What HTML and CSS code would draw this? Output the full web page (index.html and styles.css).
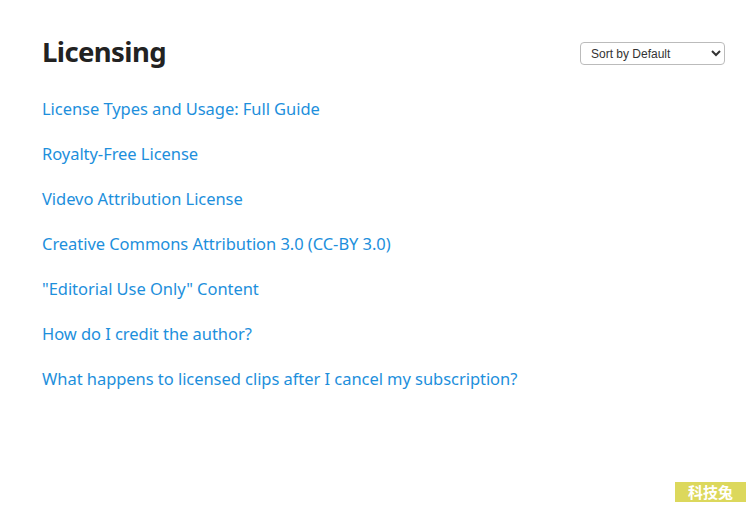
FILE: index.html
```html
<!DOCTYPE html>
<html>
<head>
<meta charset="utf-8">
<link rel="stylesheet" href="styles.css">
</head>
<body>
<div class="page">
  <div class="header">
    <h1 class="title">Licensing</h1>
    <select class="sort">
      <option>Sort by Default</option>
    </select>
  </div>
  <ul class="links">
    <li><a href="#">License Types and Usage: Full Guide</a></li>
    <li><a href="#">Royalty-Free License</a></li>
    <li><a href="#">Videvo Attribution License</a></li>
    <li><a href="#">Creative Commons Attribution 3.0 (CC-BY 3.0)</a></li>
    <li><a href="#">"Editorial Use Only" Content</a></li>
    <li><a href="#">How do I credit the author?</a></li>
    <li><a href="#">What happens to licensed clips after I cancel my subscription?</a></li>
  </ul>
</div>
<div class="badge">科技兔</div>
</body>
</html>
```
FILE: styles.css
```css
html, body {
  margin: 0;
  padding: 0;
  background: #fff;
}
body {
  width: 751px;
  height: 508px;
  position: relative;
  overflow: hidden;
  font-family: "Noto Sans", sans-serif;
}
.page {
  padding: 34px 26px 0 42px;
}
.header {
  display: flex;
  justify-content: space-between;
  align-items: flex-start;
}
.title {
  margin: 0;
  font-size: 27.5px;
  line-height: 36px;
  font-weight: 700;
  color: #222;
  letter-spacing: -0.6px;
}
.sort {
  margin-top: 8px;
  width: 145px;
  height: 23px;
  font-family: "Liberation Sans", Arial, sans-serif;
  font-size: 12px;
  color: #333;
  background: #fff;
  border: 1px solid #bbb;
  border-radius: 4px;
  padding: 0 6px;
}
.links {
  list-style: none;
  margin: 27px 0 0;
  padding: 0;
  display: flex;
  flex-direction: column;
  gap: 21px;
}
.links li {
  line-height: 24px;
  height: 24px;
}
.links a {
  color: #1d8fdc;
  text-decoration: none;
  font-size: 16.5px;
  letter-spacing: -0.05px;
}
.badge {
  position: absolute;
  left: 675px;
  top: 482px;
  width: 71px;
  height: 20px;
  background: #dcd85c;
  color: #fff;
  font-family: "Noto Sans CJK SC", sans-serif;
  font-weight: 700;
  font-size: 15px;
  line-height: 20px;
  text-align: center;
}
```
